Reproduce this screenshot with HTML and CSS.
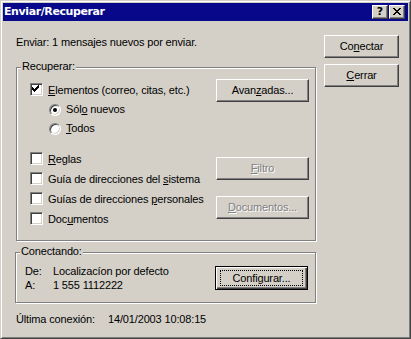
FILE: index.html
```html
<!DOCTYPE html>
<html lang="es">
<head>
<meta charset="utf-8">
<title>Enviar/Recuperar</title>
<link rel="stylesheet" href="styles.css">
</head>
<body>
<div class="window">
  <div class="titlebar">
    <span class="title">Enviar/Recuperar</span>
    <div class="caption-buttons">
      <span class="cap-btn help">?</span>
      <span class="cap-btn close">
        <svg width="8" height="7" viewBox="0 0 8 7" shape-rendering="crispEdges">
          <path fill="#000" d="M0 0h2v1h-2zM6 0h2v1h-2zM1 1h2v1h-2zM5 1h2v1h-2zM2 2h4v1h-4zM3 3h2v1h-2zM2 4h4v1h-4zM1 5h2v1h-2zM5 5h2v1h-2zM0 6h2v1h-2zM6 6h2v1h-2z"/>
        </svg>
      </span>
    </div>
  </div>
  <div class="body">
    <div class="main">
      <div class="status">Enviar: 1 mensajes nuevos por enviar.</div>

      <div class="group recuperar">
        <span class="legend">Recuperar:</span>
        <div class="options">
          <div class="row check-row">
            <span class="checkbox">
              <svg width="9" height="9" viewBox="0 0 9 9" shape-rendering="crispEdges">
                <path fill="#000" d="M6 0h1v1h-1zM5 1h2v1h-2zM0 2h1v1h-1zM4 2h3v1h-3zM0 3h2v1h-2zM3 3h3v1h-3zM0 4h5v1h-5zM1 5h3v1h-3zM2 6h1v1h-1z"/>
              </svg>
            </span>
            <span class="label"><u>E</u>lementos (correo, citas, etc.)</span>
          </div>
          <div class="row radio-row first-radio">
            <span class="radio checked"></span>
            <span class="label">Sól<u>o</u> nuevos</span>
          </div>
          <div class="row radio-row">
            <span class="radio"></span>
            <span class="label"><u>T</u>odos</span>
          </div>
          <div class="row check-row first-check">
            <span class="checkbox"></span>
            <span class="label"><u>R</u>eglas</span>
          </div>
          <div class="row check-row">
            <span class="checkbox"></span>
            <span class="label">Guía de direcciones del <u>s</u>istema</span>
          </div>
          <div class="row check-row">
            <span class="checkbox"></span>
            <span class="label">Guías de direcciones <u>p</u>ersonales</span>
          </div>
          <div class="row check-row">
            <span class="checkbox"></span>
            <span class="label">Doc<u>u</u>mentos</span>
          </div>
        </div>
        <div class="group-buttons">
          <button class="btn wide">Avan<u>z</u>adas...</button>
          <button class="btn wide disabled filtro"><u>F</u>iltro</button>
          <button class="btn wide disabled docs"><u>D</u>ocumentos...</button>
        </div>
      </div>

      <div class="group conectando">
        <span class="legend">Conectando:</span>
        <div class="conn-info">
          <div class="conn-row"><span class="conn-label">De:</span><span>Localizacíon por defecto</span></div>
          <div class="conn-row"><span class="conn-label">A:</span><span>1 555 1112222</span></div>
        </div>
        <button class="btn wide default"><span class="focus">Configurar...</span></button>
      </div>

      <div class="last">
        <span class="last-label">Última conexión:</span><span>14/01/2003 10:08:15</span>
      </div>
    </div>
    <div class="side">
      <button class="btn">Co<u>n</u>ectar</button>
      <button class="btn"><u>C</u>errar</button>
    </div>
  </div>
</div>
</body>
</html>
```

FILE: styles.css
```css
* { box-sizing: border-box; }

html, body {
  margin: 0;
  padding: 0;
  background: #d4d0c8;
}

body {
  font-family: "Liberation Sans", Arial, sans-serif;
  font-size: 11px;
  line-height: 13px;
  letter-spacing: -0.15px;
  color: #000;
}

u { text-decoration: underline; text-underline-offset: 1px; }

.window {
  width: 411px;
  height: 339px;
  background: #d4d0c8;
  border: 1px solid;
  border-color: #d4d0c8 #404040 #404040 #d4d0c8;
  box-shadow: inset 1px 1px #fff, inset -1px -1px #808080;
  padding: 2px;
}

.titlebar {
  height: 18px;
  background: #08088a;
  display: flex;
  align-items: center;
  justify-content: space-between;
  padding: 0 3px 0 1px;
}

.title {
  color: #fff;
  font-family: "DejaVu Sans", sans-serif;
  font-weight: bold;
  font-size: 11px;
  line-height: 13px;
  letter-spacing: -0.4px;
  margin-top: -1px;
}

.caption-buttons {
  display: flex;
  gap: 1px;
}

.cap-btn {
  width: 16px;
  height: 14px;
  background: #d4d0c8;
  border: 1px solid;
  border-color: #fff #404040 #404040 #fff;
  box-shadow: inset -1px -1px #808080;
  display: flex;
  align-items: center;
  justify-content: center;
  font-family: "DejaVu Sans", sans-serif;
  font-weight: bold;
  font-size: 11px;
  line-height: 12px;
  letter-spacing: 0;
  color: #000;
}

.cap-btn svg { display: block; margin-top: -1px; }

.body {
  display: flex;
  padding: 0 9px 0 13px;
}

.main {
  width: 301px;
  margin-right: 7px;
}

.status {
  margin-top: 15px;
}

.group {
  position: relative;
  border: 1px solid #808080;
  box-shadow: inset 1px 1px #fff, 1px 1px #fff;
}

.legend {
  position: absolute;
  left: 4px;
  top: -8px;
  padding: 0 1px;
  background: #d4d0c8;
}

.recuperar {
  margin-top: 18px;
  width: 300px;
  height: 174px;
  display: flex;
  align-items: flex-start;
}

.options {
  padding: 15px 0 0 13px;
}

.row {
  display: flex;
  align-items: flex-start;
  gap: 5px;
  margin-top: 6px;
}

.row:first-child { margin-top: 0; }
.row.first-check { margin-top: 17px; }

.check-row .label { padding-top: 1px; }

.radio-row { padding-left: 19px; }

.checkbox {
  width: 13px;
  height: 13px;
  flex: none;
  background: #fff;
  border: 1px solid;
  border-color: #808080 #fff #fff #808080;
  box-shadow: inset 1px 1px #404040, inset -1px -1px #d4d0c8;
  display: flex;
  align-items: center;
  justify-content: center;
}

.checkbox svg { display: block; }

.radio {
  position: relative;
  width: 12px;
  height: 12px;
  flex: none;
  margin-top: 1px;
  border-radius: 50%;
  background: #fff;
  border: 1px solid;
  border-color: #808080 #fff #fff #808080;
  box-shadow: inset 1px 1px #404040, inset -1px -1px #d4d0c8;
}

.radio.checked::after {
  content: "";
  position: absolute;
  left: 3px;
  top: 3px;
  width: 4px;
  height: 4px;
  border-radius: 50%;
  background: #000;
}

.group-buttons {
  margin-left: auto;
  margin-right: 6px;
  padding-top: 11px;
  display: flex;
  flex-direction: column;
}

.btn {
  font: inherit;
  letter-spacing: inherit;
  color: #000;
  width: 75px;
  height: 23px;
  padding: 0;
  margin: 0;
  background: #d4d0c8;
  border: 1px solid;
  border-color: #fff #404040 #404040 #fff;
  box-shadow: inset -1px -1px #808080;
  display: flex;
  align-items: center;
  justify-content: center;
  line-height: 13px;
}

.btn.wide { width: 93px; }

.btn.disabled {
  color: #808080;
  text-shadow: 1px 1px #fff;
}

.btn.filtro { margin-top: 55px; }
.btn.docs { margin-top: 16px; }

.side {
  padding-top: 14px;
  display: flex;
  flex-direction: column;
  gap: 6px;
}

.conectando {
  margin-top: 11px;
  margin-left: -1px;
  width: 301px;
  height: 51px;
  display: flex;
  align-items: flex-start;
}

.conn-info {
  padding: 12px 0 0 9px;
}

.conn-row {
  display: flex;
  margin-bottom: 1px;
}

.conn-label { width: 28px; }

.btn.default {
  margin-left: auto;
  margin-right: 7px;
  margin-top: 13px;
  height: 24px;
  border: 1px solid #000;
  box-shadow: inset 1px 1px #fff, inset -1px -1px #404040, inset -2px -2px #808080;
}

.focus {
  display: flex;
  align-items: center;
  justify-content: center;
  width: 83px;
  height: 16px;
  border: 1px dotted #000;
}

.last {
  margin-top: 10px;
  display: flex;
}

.last-label { width: 92px; }
```
